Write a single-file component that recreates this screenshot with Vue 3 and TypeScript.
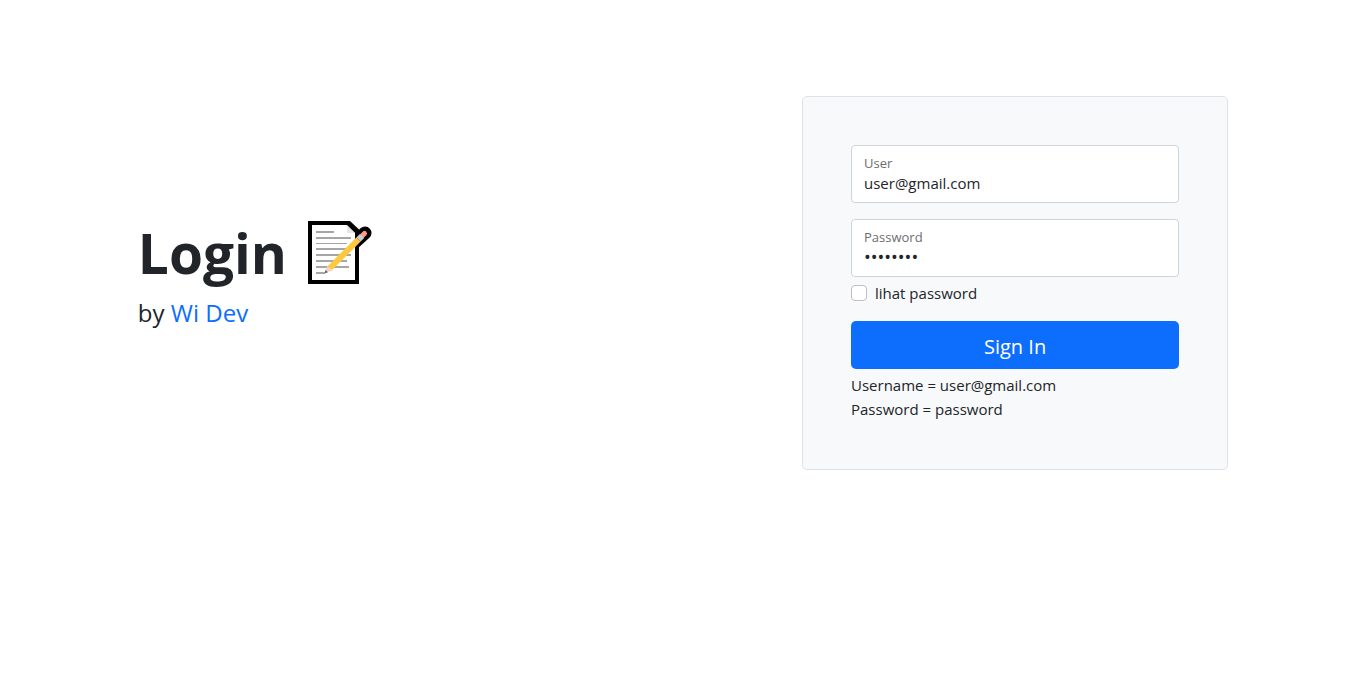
<script setup lang="ts">
import { ref } from 'vue'

const user = ref('user@gmail.com')
const password = ref('password')
const showPassword = ref(false)
</script>

<template>
  <main class="container">
    <section class="intro">
      <h1 class="title">
        <span>Login</span>
        <svg class="memo" viewBox="0 0 64 64" aria-hidden="true">
          <path d="M0 0H42L51 8.5V63H0Z" fill="#000" />
          <path d="M46 22 57 12" stroke="#000" stroke-width="13" stroke-linecap="round" />
          <path d="M4 4H38.5L47 12V59H4Z" fill="#fff" />
          <path d="M39 4V12H47Z" fill="#e6e6e6" />
          <g fill="#a6a6a6">
            <rect x="8" y="10" width="18" height="2" />
            <rect x="8" y="16" width="35" height="2" />
            <rect x="8" y="22" width="31" height="1" />
            <rect x="8" y="27" width="35" height="2" />
            <rect x="8" y="33" width="35" height="2" />
            <rect x="8" y="39" width="31" height="2" />
            <rect x="8" y="45" width="33" height="2" />
            <rect x="8" y="51" width="9" height="2" />
          </g>
          <path d="M16.5 52 19.5 44.5 24.5 49.5Z" fill="#f7d1c3" />
          <path d="M16.5 52.5 17.5 49 20 51.3Z" fill="#666" />
          <path d="M22 47 50.5 18.5" stroke="#ffc83d" stroke-width="6" />
          <path d="M54 15 56.5 12.5" stroke="#ff9a8b" stroke-width="5" stroke-linecap="round" />
          <path d="M50.5 18.5 54 15" stroke="#ccc" stroke-width="6" />
        </svg>
      </h1>
      <p class="byline">by <a href="#">Wi Dev</a></p>
    </section>

    <form class="card" @submit.prevent>
      <div class="field">
        <label for="user">User</label>
        <input id="user" v-model="user" type="email" autocomplete="username" />
      </div>
      <div class="field">
        <label for="password">Password</label>
        <input
          id="password"
          v-model="password"
          :type="showPassword ? 'text' : 'password'"
          autocomplete="current-password"
        />
      </div>
      <div class="check">
        <input id="show" v-model="showPassword" type="checkbox" />
        <label for="show">lihat password</label>
      </div>
      <button type="submit">Sign In</button>
      <p class="hint">Username = user@gmail.com<br />Password = password</p>
    </form>
  </main>
</template>

<style>
body {
  margin: 0;
  background: #fff;
}
</style>

<style scoped>
* {
  box-sizing: border-box;
}

.container {
  display: grid;
  grid-template-columns: minmax(0, 616fr) minmax(0, 426fr);
  column-gap: 48px;
  align-items: center;
  width: 83.3333%;
  margin: 0 auto;
  padding: 96px 24px;
  color: #212529;
  font-family: "Segoe UI", "Open Sans", "Noto Sans", sans-serif;
  font-size: 15px;
  line-height: 24px;
}

.intro {
  padding-bottom: 16px;
}

.title {
  display: flex;
  align-items: center;
  gap: 21px;
  margin: 0 0 8px;
  font-size: 55px;
  font-weight: 700;
  line-height: 68px;
}

.memo {
  width: 64px;
  height: 64px;
  fill: none;
}

.byline {
  margin: 0;
  font-size: 24px;
  line-height: 36px;
}

.byline a {
  color: #0d6efd;
  text-decoration: none;
}

.card {
  padding: 48px;
  border: 1px solid #dee2e6;
  border-radius: 5px;
  background: #f8f9fa;
}

.field {
  position: relative;
  height: 58px;
  margin-bottom: 16px;
}

.field label {
  position: absolute;
  top: 8px;
  left: 13px;
  color: #6c6e70;
  font-size: 13px;
  line-height: 20px;
}

.field input {
  width: 100%;
  height: 100%;
  padding: 26px 12px 8px;
  border: 1px solid #ced4da;
  border-radius: 4px;
  background: #fff;
  color: inherit;
  font: inherit;
  line-height: 20px;
}

.field input[type="password"] {
  font-size: 18px;
}

.check {
  display: flex;
  align-items: center;
  gap: 8px;
  margin: -12px 0 16px;
}

.check input {
  appearance: none;
  width: 16px;
  height: 16px;
  margin: 0;
  border: 1px solid #bfbfbf;
  border-radius: 4px;
  background: #fff;
}

.check input:checked {
  border-color: #0d6efd;
  background: #0d6efd;
}

button {
  display: block;
  width: 100%;
  height: 48px;
  padding: 4px 16px 0;
  border: 0;
  border-radius: 5px;
  background: #0d6efd;
  color: #fff;
  font: inherit;
  font-size: 20px;
  line-height: 30px;
}

.hint {
  margin: 4px 0 0;
}
</style>
